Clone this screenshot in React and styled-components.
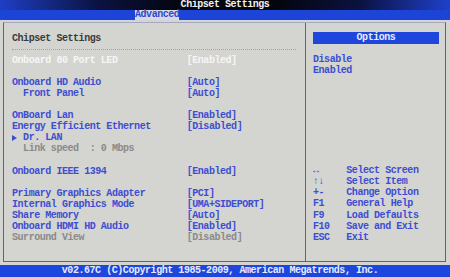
import styled, { createGlobalStyle } from "styled-components";

const ROW = 11.1;

const GlobalStyle = createGlobalStyle`
    html, body {
        margin: 0;
        padding: 0;
        background: #000;
    }
    body {
        font-family: "Liberation Mono", "DejaVu Sans Mono", monospace;
        font-weight: bold;
        font-size: 10px;
        letter-spacing: -0.45px;
    }
`;

const settings = [
    { label: "Onboard 80 Port LED", value: "[Enabled]", tone: "active" },
    null,
    { label: "Onboard HD Audio", value: "[Auto]" },
    { label: "Front Panel", value: "[Auto]", indent: true },
    null,
    { label: "OnBoard Lan", value: "[Enabled]" },
    { label: "Energy Efficient Ethernet", value: "[Disabled]" },
    { label: "Dr. LAN", submenu: true },
    { label: "Link speed  : 0 Mbps", indent: true, tone: "muted" },
    null,
    { label: "Onboard IEEE 1394", value: "[Enabled]" },
    null,
    { label: "Primary Graphics Adapter", value: "[PCI]" },
    { label: "Internal Graphics Mode", value: "[UMA+SIDEPORT]" },
    { label: "Share Memory", value: "[Auto]" },
    { label: "Onboard HDMI HD Audio", value: "[Enabled]" },
    { label: "Surround View", value: "[Disabled]", tone: "muted" },
];

const helpKeys = [
    ["↔", "Select Screen"],
    ["↑↓", "Select Item"],
    ["+-", "Change Option"],
    ["F1", "General Help"],
    ["F9", "Load Defaults"],
    ["F10", "Save and Exit"],
    ["ESC", "Exit"],
];

const App = () => {
    return (
        <Screen>
            <GlobalStyle />
            <TitleBar>Chipset Settings</TitleBar>
            <TabBar>
                <Tab>Advanced</Tab>
            </TabBar>
            <Main>
                <Frame>
                    <SettingsPanel>
                        <PanelTitle>Chipset Settings</PanelTitle>
                        <Separator />
                        {settings.map((item, i) =>
                            item ? (
                                <Row key={i} tone={item.tone}>
                                    <Label indent={item.indent}>
                                        {item.submenu && <Marker />}
                                        {item.label}
                                    </Label>
                                    <span>{item.value}</span>
                                </Row>
                            ) : (
                                <Row key={i} />
                            )
                        )}
                    </SettingsPanel>
                    <HelpPanel>
                        <OptionsHeader>Options</OptionsHeader>
                        <Line />
                        <Line>Disable</Line>
                        <Line>Enabled</Line>
                        <KeyList>
                            {helpKeys.map(([k, desc]) => (
                                <KeyRow key={k}>
                                    <span>{k}</span>
                                    <span>{desc}</span>
                                </KeyRow>
                            ))}
                        </KeyList>
                    </HelpPanel>
                </Frame>
            </Main>
            <Footer>v02.67C (C)Copyright 1985-2009, American Megatrends, Inc.</Footer>
        </Screen>
    );
};

const Screen = styled.div`
    width: 450px;
    height: 277px;
    display: flex;
    flex-direction: column;
    overflow: hidden;
    white-space: pre;
`;

const TitleBar = styled.div`
    height: 10px;
    line-height: 10px;
    text-align: center;
    color: #f2f2f2;
    background: linear-gradient(90deg, #1f3ec4 0%, #0b1240 22%, #04060f 40%, #04060f 62%, #0b1240 80%, #1f40cc 100%);
`;

const TabBar = styled.div`
    height: 10px;
    padding-left: 135px;
    background: #1c45d8;
    display: flex;
`;

const Tab = styled.div`
    width: 44px;
    line-height: 10px;
    background: #d6d8e6;
    color: #3048d0;
`;

const Main = styled.div`
    flex: 1;
    background: #d4d4d0;
    padding: 2px 4px 3px 3px;
    display: flex;
`;

const Frame = styled.div`
    flex: 1;
    display: grid;
    grid-template-columns: 302px 1fr;
    border: 1px solid #4a5cd0;
    border-top-color: #a4a8c4;
`;

const SettingsPanel = styled.div`
    padding: 9.5px 0 0 8px;
    border-right: 1px solid #4a5cd0;
`;

const PanelTitle = styled.div`
    height: ${ROW}px;
    line-height: ${ROW}px;
    color: #3a3a3a;
`;

const Separator = styled.div`
    height: ${ROW}px;
    margin-right: 9px;
    display: flex;
    align-items: center;

    &::after {
        content: "";
        flex: 1;
        border-top: 1px dotted #9aa2c8;
    }
`;

const toneColor = {
    active: "#f6f6f6",
    muted: "#8a8a8a",
};

const Row = styled.div`
    height: ${ROW}px;
    line-height: ${ROW}px;
    display: grid;
    grid-template-columns: 174.7px 1fr;
    color: ${(p) => toneColor[p.tone] || "#3c4ed2"};
`;

const Label = styled.span`
    display: flex;
    align-items: center;
    padding-left: ${(p) => (p.indent ? "11.1px" : "0")};
`;

const Marker = styled.span`
    width: 11.1px;
    height: 6px;
    flex: none;
    display: flex;
    align-items: center;

    &::before {
        content: "";
        border-left: 5px solid #3c4ed2;
        border-top: 3px solid transparent;
        border-bottom: 3px solid transparent;
    }
`;

const HelpPanel = styled.div`
    padding: 9px 6px 0 7px;
    display: flex;
    flex-direction: column;
    color: #3c4ed2;
`;

const OptionsHeader = styled.div`
    height: 11.6px;
    line-height: 11.6px;
    background: #1e46dc;
    color: #e8ecff;
    text-align: center;
    margin-bottom: -0.5px;
`;

const Line = styled.div`
    height: ${ROW}px;
    line-height: ${ROW}px;
`;

const KeyList = styled.div`
    margin-top: ${ROW * 8}px;
`;

const KeyRow = styled.div`
    height: ${ROW}px;
    line-height: ${ROW}px;
    display: grid;
    grid-template-columns: 33.3px 1fr;
`;

const Footer = styled.div`
    height: 12px;
    line-height: 12px;
    padding-right: 10px;
    text-align: center;
    background: #1c46de;
    color: #e6ecff;
`;

export default App;
